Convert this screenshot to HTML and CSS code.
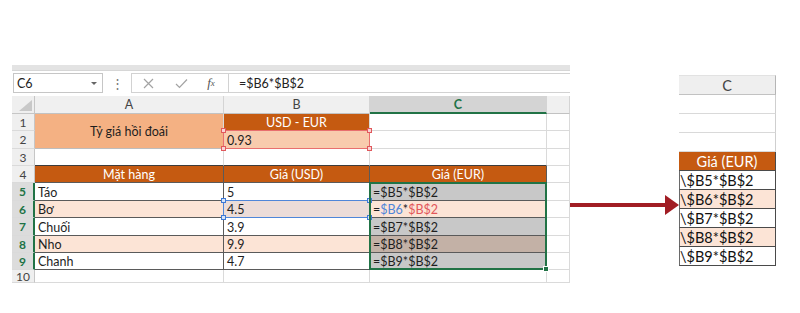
FILE: index.html
```html
<!DOCTYPE html>
<html lang="vi">
<head>
<meta charset="utf-8">
<title>Excel</title>
<link rel="stylesheet" href="styles.css">
</head>
<body>
<div class="stage">
  <div class="sheet">
    <div class="ribbon-edge"></div>
    <div class="fbar">
      <div class="namebox"><span>C6</span><i class="caret"></i></div>
      <div class="dots">⋮</div>
      <div class="fbtns">
        <span class="btn"><svg width="11" height="11" viewBox="0 0 11 11"><path d="M1 1L10 10M10 1L1 10" stroke="#a3a3a3" stroke-width="1.2" fill="none"/></svg></span>
        <span class="btn"><svg width="13" height="11" viewBox="0 0 13 11"><path d="M1 6L4.5 9.5L12 1.5" stroke="#a3a3a3" stroke-width="1.2" fill="none"/></svg></span>
        <span class="btn fx"><i>f</i><sub>x</sub></span>
      </div>
      <div class="finput">=$B6*$B$2</div>
    </div>
    <div class="grid">
      <div class="corner"><i></i></div>
      <div class="ch">A</div><div class="ch">B</div><div class="ch sel">C</div><div class="ch"></div>

      <div class="rh">1</div>
      <div class="c ctr rate">Tỷ giá hồi đoái</div>
      <div class="c ctr dk">USD - EUR</div><div class="c"></div><div class="c"></div>

      <div class="rh">2</div>
      <div class="c rate2">0.93</div><div class="c"></div><div class="c"></div>

      <div class="rh">3</div>
      <div class="c top"></div><div class="c top"></div><div class="c top"></div><div class="c"></div>

      <div class="rh">4</div>
      <div class="c ctr dk t">Mặt hàng</div><div class="c ctr dk t">Giá (USD)</div><div class="c ctr dk t">Giá (EUR)</div><div class="c"></div>

      <div class="rh sel">5</div>
      <div class="c t">Táo</div><div class="c t">5</div><div class="c t gr">=$B5*$B$2</div><div class="c"></div>

      <div class="rh sel">6</div>
      <div class="c t pe">Bơ</div><div class="c t b6">4.5</div><div class="c t pe">=<span class="blue">$B6</span>*<span class="red">$B$2</span></div><div class="c"></div>

      <div class="rh sel">7</div>
      <div class="c t">Chuối</div><div class="c t">3.9</div><div class="c t gr">=$B7*$B$2</div><div class="c"></div>

      <div class="rh sel">8</div>
      <div class="c t pe">Nho</div><div class="c t pe">9.9</div><div class="c t grp">=$B8*$B$2</div><div class="c"></div>

      <div class="rh sel">9</div>
      <div class="c t">Chanh</div><div class="c t">4.7</div><div class="c t gr">=$B9*$B$2</div><div class="c"></div>

      <div class="rh">10</div>
      <div class="c"></div><div class="c"></div><div class="c"></div><div class="c"></div>

      <div class="ref ref-red"><i class="sq tl"></i><i class="sq tr"></i><i class="sq bl"></i><i class="sq br"></i></div>
      <div class="ref ref-blue"><i class="sq tl"></i><i class="sq tr"></i><i class="sq bl"></i><i class="sq br"></i></div>
      <div class="selbox"><i class="handle"></i></div>
    </div>
  </div>

  <div class="arrow">
    <svg width="109" height="21" viewBox="0 0 109 21">
      <line x1="0" y1="10" x2="97" y2="10" stroke="#a11d24" stroke-width="4"/>
      <polygon points="95,0 109,10 95,20" fill="#a11d24"/>
    </svg>
  </div>

  <div class="mini">
    <div class="m-h">C</div>
    <div class="m-e"></div>
    <div class="m-e"></div>
    <div class="m-e"></div>
    <div class="m-t">Giá (EUR)</div>
    <div class="m-d">\$B5*$B$2</div>
    <div class="m-d pe">\$B6*$B$2</div>
    <div class="m-d">\$B7*$B$2</div>
    <div class="m-d pe">\$B8*$B$2</div>
    <div class="m-d">\$B9*$B$2</div>
  </div>
</div>
</body>
</html>
```

FILE: styles.css
```css
* { box-sizing: border-box; }

body {
  margin: 0;
  background: #ffffff;
  font-family: Lato, "Open Sans", sans-serif;
  color: #1e1e1e;
}

.stage {
  display: flex;
  align-items: flex-start;
  padding-top: 65px;
  height: 313px;
  overflow: hidden;
}

/* ---------- left spreadsheet ---------- */
.sheet {
  margin-left: 12px;
  width: 558px;
}

.ribbon-edge {
  height: 6px;
  background: #e3e3e3;
  border-bottom: 1px solid #d6d6d6;
}

.fbar {
  height: 25px;
  display: flex;
  align-items: flex-start;
  background: #ffffff;
}

.namebox {
  margin-top: 2px;
  margin-left: 1px;
  width: 90px;
  height: 20px;
  border: 1px solid #c6c6c6;
  display: flex;
  align-items: center;
  justify-content: space-between;
  padding: 0 5px 0 3px;
  font-size: 12.5px;
  color: #222;
}

.caret {
  width: 0;
  height: 0;
  border-left: 3px solid transparent;
  border-right: 3px solid transparent;
  border-top: 3px solid #666;
}

.dots {
  width: 28px;
  height: 24px;
  display: flex;
  align-items: center;
  justify-content: center;
  font-size: 13px;
  color: #777;
}

.fbtns {
  margin-top: 2px;
  width: 97px;
  height: 20px;
  border: 1px solid #d2d2d2;
  border-right: none;
  display: flex;
  align-items: center;
}

.btn {
  width: 33px;
  height: 18px;
  display: flex;
  align-items: center;
  justify-content: center;
}

.btn.fx {
  width: 26px;
  font-family: "Liberation Serif", serif;
  font-size: 13px;
  color: #555;
}

.fx sub {
  font-style: italic;
  font-size: 9px;
  vertical-align: -1px;
}

.finput {
  margin-top: 2px;
  flex: 1;
  height: 20px;
  border: 1px solid #d2d2d2;
  border-right: none;
  display: flex;
  align-items: center;
  padding-left: 10px;
  font-size: 12.5px;
  color: #222;
}

.grid {
  position: relative;
  display: grid;
  grid-template-columns: 23px 189px 146px 177px 23px;
  grid-template-rows: 18px 17px 18px 17px 17px 18px 17px 18px 17px 17px 13px;
  overflow: hidden;
  font-size: 12.5px;
}

.corner {
  background: #efefef;
  border-right: 1px solid #c6c6c6;
  border-bottom: 1px solid #c6c6c6;
  display: flex;
  align-items: flex-end;
  justify-content: flex-end;
  padding: 0 2px 2px 0;
}

.corner i {
  width: 13px;
  height: 11px;
  background: #c8c8c8;
  clip-path: polygon(100% 0, 100% 100%, 0 100%);
}

.ch {
  background: #f0f0f0;
  border-right: 1px solid #d4d4d4;
  border-bottom: 1px solid #c2c2c2;
  display: flex;
  align-items: center;
  justify-content: center;
  color: #444;
  font-size: 12.5px;
}

.ch.sel {
  background: #d4d4d4;
  color: #217346;
  font-weight: bold;
  border-bottom: 2px solid #217346;
}

.rh {
  background: #efefef;
  border-right: 1px solid #c6c6c6;
  border-bottom: 1px solid #dadada;
  display: flex;
  align-items: center;
  justify-content: center;
  color: #444;
  font-size: 12px;
}

.rh.sel {
  background: #dcdcdc;
  color: #217346;
  font-weight: bold;
  border-right: 2px solid #217346;
}

.c {
  border-right: 1px solid #dadada;
  border-bottom: 1px solid #dadada;
  display: flex;
  align-items: center;
  padding: 1px 0 0 3px;
  white-space: nowrap;
  overflow: hidden;
}

.ctr {
  justify-content: center;
  padding-left: 0;
}

.rate {
  grid-row: span 2;
  background: #f4b183;
  border-bottom: 1px solid #bdbdbd;
}

.rate2 {
  background: #f8cbad;
}

.dk {
  background: #c55a11;
  color: #ffffff;
}

.top {
  border-bottom: 1px solid #3c3c3c;
}

.t {
  border-right: 1px solid #5a5a5a;
  border-bottom: 1px solid #5a5a5a;
}

.pe { background: #fce4d6; }
.gr { background: #c8c8c8; }
.grp { background: #c3b1a6; }
.b6 { background: #ecdcd8; }

.blue { color: #4f86d9; }
.red { color: #e2575b; }

/* overlays: reference highlights and selection */
.ref {
  position: absolute;
  inset: -1px 0 0 -1px;
  border: 1px solid;
  pointer-events: none;
}

.ref-red {
  grid-column: 3 / 4;
  grid-row: 3 / 4;
  border-color: #e86f6f;
}

.ref-blue {
  grid-column: 3 / 4;
  grid-row: 7 / 8;
  border-color: #4f86d9;
}

.sq {
  position: absolute;
  width: 5px;
  height: 5px;
  border: 1px solid;
}

.ref-red .sq { border-color: #e0585c; background: #fbd3d3; }
.ref-blue .sq { border-color: #3e79d6; background: #d6e3f8; }

.tl { left: -3px; top: -3px; }
.tr { right: -3px; top: -3px; }
.bl { left: -3px; bottom: -3px; }
.br { right: -3px; bottom: -3px; }

.selbox {
  position: absolute;
  grid-column: 4 / 5;
  grid-row: 6 / 11;
  inset: -1px 0 0 -1px;
  border: 2px solid #217346;
  pointer-events: none;
}

.handle {
  position: absolute;
  right: -4px;
  bottom: -4px;
  width: 6px;
  height: 6px;
  background: #217346;
  border: 1px solid #ffffff;
}

/* ---------- arrow ---------- */
.arrow {
  width: 109px;
  margin-top: 130px;
  display: flex;
}

/* ---------- right mini table ---------- */
.mini {
  margin-top: 10px;
  width: 97px;
  font-size: 14.5px;
}

.m-h {
  height: 20px;
  background: #efefef;
  border-top: 1px solid #e2e2e2;
  border-right: 1px solid #b5b5b5;
  border-bottom: 1px solid #c2c2c2;
  display: flex;
  align-items: center;
  justify-content: center;
  color: #444;
}

.m-e {
  height: 19px;
  border-right: 1px solid #cfcfcf;
  border-bottom: 1px solid #d9d9d9;
}

.m-t {
  height: 19px;
  background: #c55a11;
  color: #ffffff;
  border-right: 1px solid #4a4a4a;
  border-bottom: 1px solid #4a4a4a;
  display: flex;
  align-items: center;
  justify-content: center;
}

.m-d {
  height: 19px;
  border-left: 1px solid #6a6a6a;
  border-right: 1px solid #4a4a4a;
  border-bottom: 1px solid #4a4a4a;
  display: flex;
  align-items: center;
  padding-top: 1px;
  white-space: nowrap;
  color: #111;
}
```
